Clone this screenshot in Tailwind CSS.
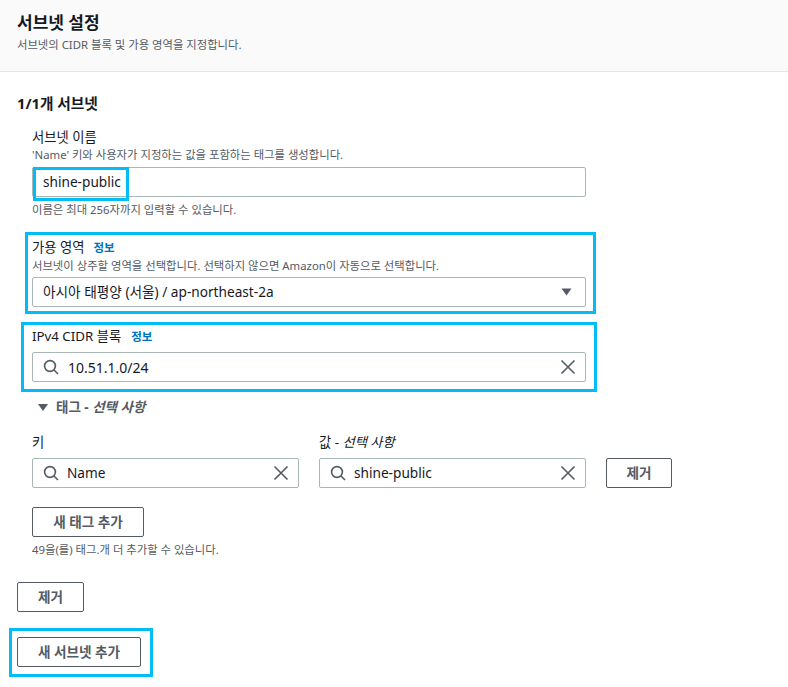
<!DOCTYPE html>
<html lang="ko">
<head>
    <meta charset="UTF-8">
    <title>서브넷 설정</title>
    <script src="https://cdn.jsdelivr.net/npm/@tailwindcss/browser@4"></script>
</head>
<body class="bg-white w-[788px] h-[687px] overflow-hidden relative text-[#16191f] font-['Noto_Sans','Noto_Sans_CJK_KR',sans-serif]">

<!-- header -->
<div class="h-[72px] bg-[#fafafa] border-b border-[#e4e7e7] px-[17px] pt-[11px]">
    <h1 class="text-[17px] leading-[24px] font-bold">서브넷 설정</h1>
    <p class="text-[11.35px] leading-[16px] mt-[2px] text-[#545b64]">서브넷의 CIDR 블록 및 가용 영역을 지정합니다.</p>
</div>

<div class="px-[17px]">
    <h2 class="text-[14.7px] leading-[20px] font-bold mt-[21px]">1/1개 서브넷</h2>

    <div class="pl-[15px] w-[569px]">
        <!-- name -->
        <div class="text-[13.3px] leading-[20px] mt-[14px]">서브넷 이름</div>
        <div class="text-[11.35px] leading-[16px] text-[#545b64]">'Name' 키와 사용자가 지정하는 값을 포함하는 태그를 생성합니다.</div>
        <div class="h-[30px] mt-[4px] border border-[#aab7b8] rounded-[2px] pl-[10px] flex items-center text-[13.65px]">shine-public</div>
        <div class="text-[11.35px] leading-[16px] mt-[5px] text-[#545b64]">이름은 최대 256자까지 입력할 수 있습니다.</div>

        <!-- availability zone -->
        <div class="flex items-center gap-[9px] mt-[20px] h-[20px]">
            <span class="text-[13.3px]">가용 영역</span>
            <span class="text-[11.5px] font-bold text-[#0073bb]">정보</span>
        </div>
        <div class="text-[11.35px] leading-[16px] text-[#545b64]">서브넷이 상주할 영역을 선택합니다. 선택하지 않으면 Amazon이 자동으로 선택합니다.</div>
        <div class="h-[30px] mt-[3px] border border-[#aab7b8] rounded-[2px] pl-[10px] pr-[13px] flex items-center justify-between text-[13.65px]">
            <span>아시아 태평양 (서울) / ap-northeast-2a</span>
            <svg class="w-[11px] h-[8px]" viewBox="0 0 11 8"><path d="M0.5 0.5h10L5.5 7.5z" fill="#545b64"/></svg>
        </div>

        <!-- cidr -->
        <div class="flex items-center gap-[10px] mt-[20px] h-[20px]">
            <span class="text-[13.3px]">IPv4 CIDR 블록</span>
            <span class="text-[11.5px] font-bold text-[#0073bb]">정보</span>
        </div>
        <div class="h-[30px] mt-[5px] border border-[#aab7b8] rounded-[2px] pl-[10px] pr-[9px] flex items-center text-[14px]">
            <svg class="w-[16px] h-[16px] text-[#545b64]" viewBox="0 0 16 16" fill="none" stroke="currentColor" stroke-width="1.6"><circle cx="7" cy="7" r="5.4"/><path d="M11 11l4 4"/></svg>
            <span class="ml-[9px] flex-1">10.51.1.0/24</span>
            <svg class="w-[16px] h-[16px] text-[#545b64]" viewBox="0 0 16 16" fill="none" stroke="currentColor" stroke-width="1.6"><path d="M1.5 1.5l13 13M14.5 1.5l-13 13"/></svg>
        </div>

        <!-- tags -->
        <div class="flex items-center mt-[15px] h-[20px] pl-[6px] text-[#545b64] text-[13.5px] font-bold">
            <svg class="w-[10px] h-[7px]" viewBox="0 0 10 7"><path d="M0 0h10L5 7z" fill="#545b64"/></svg>
            <span class="ml-[8px]">태그 - <i>선택 사항</i></span>
        </div>

        <div class="grid grid-cols-[267px_267px_66px] gap-x-[20px] w-[640px] mt-[15px]">
            <div class="text-[13.3px] leading-[20px]">키</div>
            <div class="text-[13.3px] leading-[20px]">값 - <i>선택 사항</i></div>
            <div></div>
            <div class="h-[30px] mt-[6px] border border-[#aab7b8] rounded-[2px] pl-[10px] pr-[9px] flex items-center text-[13.65px]">
                <svg class="w-[16px] h-[16px] text-[#545b64]" viewBox="0 0 16 16" fill="none" stroke="currentColor" stroke-width="1.6"><circle cx="7" cy="7" r="5.4"/><path d="M11 11l4 4"/></svg>
                <span class="ml-[8px] flex-1">Name</span>
                <svg class="w-[16px] h-[16px] text-[#545b64]" viewBox="0 0 16 16" fill="none" stroke="currentColor" stroke-width="1.6"><path d="M1.5 1.5l13 13M14.5 1.5l-13 13"/></svg>
            </div>
            <div class="h-[30px] mt-[6px] border border-[#aab7b8] rounded-[2px] pl-[10px] pr-[9px] flex items-center text-[13.65px]">
                <svg class="w-[16px] h-[16px] text-[#545b64]" viewBox="0 0 16 16" fill="none" stroke="currentColor" stroke-width="1.6"><circle cx="7" cy="7" r="5.4"/><path d="M11 11l4 4"/></svg>
                <span class="ml-[8px] flex-1">shine-public</span>
                <svg class="w-[16px] h-[16px] text-[#545b64]" viewBox="0 0 16 16" fill="none" stroke="currentColor" stroke-width="1.6"><path d="M1.5 1.5l13 13M14.5 1.5l-13 13"/></svg>
            </div>
            <button class="h-[30px] mt-[6px] border border-[#545b64] rounded-[2px] text-[13.6px] font-bold text-[#545b64]">제거</button>
        </div>

        <button class="block w-[112px] h-[30px] mt-[19px] border border-[#545b64] rounded-[2px] text-[13.6px] font-bold text-[#545b64]">새 태그 추가</button>
        <div class="text-[11.35px] leading-[16px] mt-[5px] text-[#545b64] whitespace-nowrap">49을(를) 태그.개 더 추가할 수 있습니다.</div>
    </div>

    <button class="block w-[67px] h-[30px] mt-[24px] border border-[#545b64] rounded-[2px] text-[13.6px] font-bold text-[#545b64]">제거</button>
    <button class="block w-[124px] h-[30px] mt-[25px] border border-[#545b64] rounded-[2px] text-[13.6px] font-bold text-[#545b64]">새 서브넷 추가</button>
</div>

<!-- cyan annotation boxes drawn over the form -->
<div class="absolute left-[33px] top-[167px] w-[96px] h-[34px] border-[3px] border-[#00bdf5]"></div>
<div class="absolute left-[25px] top-[232px] w-[571px] h-[82px] border-[3px] border-[#00bdf5]"></div>
<div class="absolute left-[21px] top-[322px] w-[576px] h-[70px] border-[3px] border-[#00bdf5]"></div>
<div class="absolute left-[9px] top-[628px] w-[144px] h-[49px] border-[3px] border-[#00bdf5]"></div>
</body>
</html>
